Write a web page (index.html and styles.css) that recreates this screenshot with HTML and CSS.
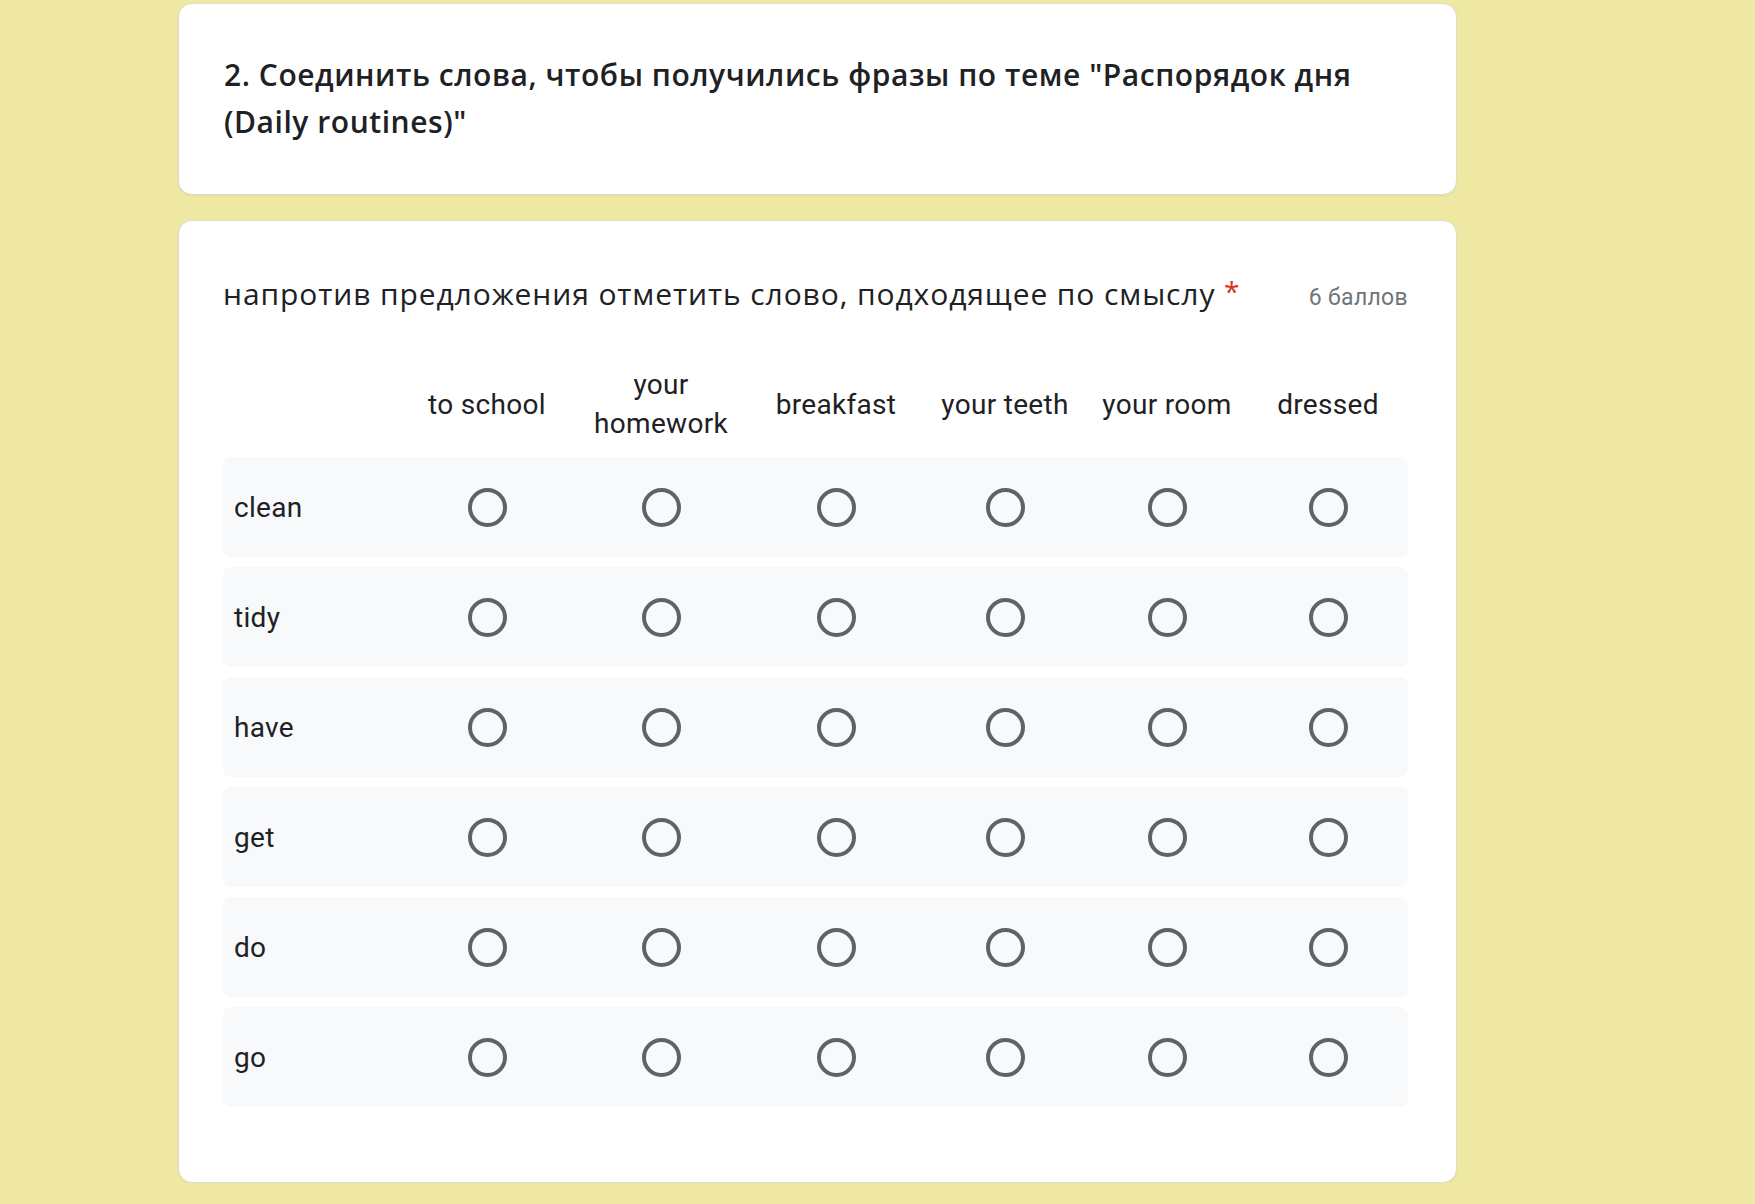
FILE: index.html
```html
<!DOCTYPE html>
<html lang="ru">
<head>
<meta charset="utf-8">
<title>Form</title>
<link rel="stylesheet" href="styles.css">
</head>
<body>
<main class="page">
  <section class="card card-title">
    <h2 class="section-title">2. Соединить слова, чтобы получились фразы по теме "Распорядок дня (Daily routines)"</h2>
  </section>
  <section class="card card-question">
    <div class="q-head">
      <div class="q-text">напротив предложения отметить слово, подходящее по смыслу <span class="req">*</span></div>
      <div class="q-points">6 баллов</div>
    </div>
    <div class="grid">
      <div class="grid-head">
        <div class="cell-label"></div>
        <div class="col-h">to school</div>
        <div class="col-h">your homework</div>
        <div class="col-h">breakfast</div>
        <div class="col-h">your teeth</div>
        <div class="col-h">your room</div>
        <div class="col-h">dressed</div>
      </div>
      <div class="grid-row"><div class="cell-label">clean</div><div class="cell"><span class="radio"></span></div><div class="cell"><span class="radio"></span></div><div class="cell"><span class="radio"></span></div><div class="cell"><span class="radio"></span></div><div class="cell"><span class="radio"></span></div><div class="cell"><span class="radio"></span></div></div>
      <div class="grid-row"><div class="cell-label">tidy</div><div class="cell"><span class="radio"></span></div><div class="cell"><span class="radio"></span></div><div class="cell"><span class="radio"></span></div><div class="cell"><span class="radio"></span></div><div class="cell"><span class="radio"></span></div><div class="cell"><span class="radio"></span></div></div>
      <div class="grid-row"><div class="cell-label">have</div><div class="cell"><span class="radio"></span></div><div class="cell"><span class="radio"></span></div><div class="cell"><span class="radio"></span></div><div class="cell"><span class="radio"></span></div><div class="cell"><span class="radio"></span></div><div class="cell"><span class="radio"></span></div></div>
      <div class="grid-row"><div class="cell-label">get</div><div class="cell"><span class="radio"></span></div><div class="cell"><span class="radio"></span></div><div class="cell"><span class="radio"></span></div><div class="cell"><span class="radio"></span></div><div class="cell"><span class="radio"></span></div><div class="cell"><span class="radio"></span></div></div>
      <div class="grid-row"><div class="cell-label">do</div><div class="cell"><span class="radio"></span></div><div class="cell"><span class="radio"></span></div><div class="cell"><span class="radio"></span></div><div class="cell"><span class="radio"></span></div><div class="cell"><span class="radio"></span></div><div class="cell"><span class="radio"></span></div></div>
      <div class="grid-row"><div class="cell-label">go</div><div class="cell"><span class="radio"></span></div><div class="cell"><span class="radio"></span></div><div class="cell"><span class="radio"></span></div><div class="cell"><span class="radio"></span></div><div class="cell"><span class="radio"></span></div><div class="cell"><span class="radio"></span></div></div>
    </div>
  </section>
</main>
</body>
</html>
```
FILE: styles.css
```css
html, body {
  margin: 0;
  padding: 0;
}
body {
  background: #efe8a2;
  color: #202124;
  font-family: Roboto, "Liberation Sans", sans-serif;
}
.page {
  padding: 3px 0 0 178px;
  display: flex;
  flex-direction: column;
  gap: 25px;
}
.card {
  width: 1279px;
  box-sizing: border-box;
  background: #fff;
  border: 1px solid #dcdcd0;
  border-radius: 14px;
  box-shadow: 0 1px 2px rgba(0,0,0,0.06);
}
.card-title {
  height: 192px;
  padding: 47px 45px;
}
.section-title {
  margin: 0;
  font-family: "Open Sans", sans-serif;
  font-weight: 600;
  font-size: 30px;
  line-height: 47px;
  letter-spacing: 0.55px;
  color: #202124;
}
.card-question {
  height: 963px;
  padding: 53px 48px 0 44px;
}
.q-head {
  display: flex;
  justify-content: space-between;
  align-items: center;
  height: 40px;
}
.q-text {
  font-family: "Open Sans", sans-serif;
  font-size: 30px;
  line-height: 40px;
  letter-spacing: 0.9px;
  color: #202124;
}
.req {
  color: #d93025;
  font-size: 28px;
  position: relative;
  top: -3px;
}
.q-points {
  font-family: Roboto, sans-serif;
  font-size: 23px;
  color: #70757a;
  letter-spacing: 0.3px;
  padding-top: 6px;
}
.grid {
  margin-top: 37px;
  display: flex;
  flex-direction: column;
  gap: 10px;
}
.grid-head, .grid-row {
  display: grid;
  grid-template-columns: 178px 172px 176px 174px 164px 160px 162px;
  align-items: center;
}
.grid-head {
  height: 106px;
  margin-bottom: -10px;
}
.col-h {
  text-align: center;
  font-size: 28px;
  line-height: 39px;
  letter-spacing: 0.3px;
  color: #202124;
  padding: 0 12px;
}
.grid-row {
  height: 100px;
  background: #f8f9fa;
  border-radius: 8px;
}
.cell-label {
  padding-left: 11px;
  font-size: 28px;
  letter-spacing: 0.3px;
  color: #202124;
}
.cell {
  display: flex;
  justify-content: center;
  align-items: center;
}
.radio {
  width: 39px;
  height: 39px;
  box-sizing: border-box;
  border: 4px solid #5f6368;
  border-radius: 50%;
}
```
